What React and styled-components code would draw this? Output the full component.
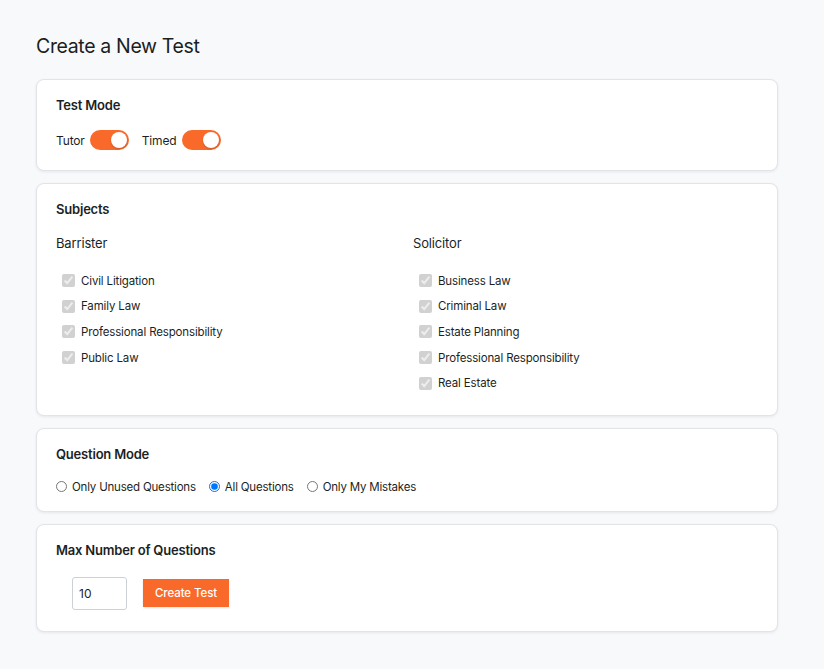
import React, { useState } from "react";
import styled, { createGlobalStyle } from "styled-components";

const GlobalStyle = createGlobalStyle`
  body {
    margin: 0;
    background: #f8f9fb;
    font-family: Inter, "Noto Sans", sans-serif;
    color: #1c1f24;
  }
`;

const barrister = ["Civil Litigation", "Family Law", "Professional Responsibility", "Public Law"];
const solicitor = ["Business Law", "Criminal Law", "Estate Planning", "Professional Responsibility", "Real Estate"];

function App() {
  const [tutor, setTutor] = useState(true);
  const [timed, setTimed] = useState(true);
  const [mode, setMode] = useState("all");

  return (
    <Page>
      <GlobalStyle />
      <Title>Create a New Test</Title>

      <Card>
        <Heading>Test Mode</Heading>
        <ToggleRow>
          <ToggleLabel>
            Tutor
            <Switch $on={tutor} onClick={() => setTutor(!tutor)} />
          </ToggleLabel>
          <ToggleLabel>
            Timed
            <Switch $on={timed} onClick={() => setTimed(!timed)} />
          </ToggleLabel>
        </ToggleRow>
      </Card>

      <Card $bottom={19}>
        <Heading>Subjects</Heading>
        <Columns>
          <Column>
            <GroupTitle>Barrister</GroupTitle>
            {barrister.map((s) => (
              <CheckRow key={s}>
                <input type="checkbox" checked disabled readOnly />
                {s}
              </CheckRow>
            ))}
          </Column>
          <Column>
            <GroupTitle>Solicitor</GroupTitle>
            {solicitor.map((s) => (
              <CheckRow key={s}>
                <input type="checkbox" checked disabled readOnly />
                {s}
              </CheckRow>
            ))}
          </Column>
        </Columns>
      </Card>

      <Card $bottom={17}>
        <Heading>Question Mode</Heading>
        <RadioRow>
          <RadioLabel>
            <input type="radio" name="qm" checked={mode === "unused"} onChange={() => setMode("unused")} />
            Only Unused Questions
          </RadioLabel>
          <RadioLabel>
            <input type="radio" name="qm" checked={mode === "all"} onChange={() => setMode("all")} />
            All Questions
          </RadioLabel>
          <RadioLabel>
            <input type="radio" name="qm" checked={mode === "mistakes"} onChange={() => setMode("mistakes")} />
            Only My Mistakes
          </RadioLabel>
        </RadioRow>
      </Card>

      <Card $bottom={21}>
        <Heading>Max Number of Questions</Heading>
        <ActionRow>
          <NumberInput type="number" defaultValue={10} />
          <Button>Create Test</Button>
        </ActionRow>
      </Card>
    </Page>
  );
}

const Page = styled.div`
  width: 742px;
  padding: 33px 36px 38px;
  display: flex;
  flex-direction: column;
  gap: 12px;
`;

const Title = styled.h1`
  margin: 0 0 8px;
  font-size: 19.5px;
  font-weight: 400;
  letter-spacing: -0.35px;
  color: #1b1e23;
  line-height: 26px;
`;

const Card = styled.section`
  background: #fff;
  border: 1px solid #e1e4e9;
  border-radius: 8px;
  box-shadow: 0 1px 3px rgba(20, 30, 50, 0.08);
  padding: 16px 19px ${(p) => p.$bottom ?? 20}px;
`;

const Heading = styled.h2`
  margin: 0;
  font-size: 13px;
  font-weight: 600;
  letter-spacing: -0.2px;
  line-height: 18px;
`;

const ToggleRow = styled.div`
  display: flex;
  gap: 13px;
  margin-top: 16px;
`;

const ToggleLabel = styled.label`
  display: flex;
  align-items: center;
  gap: 5px;
  font-size: 12px;
  letter-spacing: -0.15px;
`;

const Switch = styled.span`
  position: relative;
  width: 39px;
  height: 20px;
  border-radius: 10px;
  background: ${(p) => (p.$on ? "#f96a2a" : "#cfd3da")};
  cursor: pointer;
  &::after {
    content: "";
    position: absolute;
    top: 2px;
    left: ${(p) => (p.$on ? "21px" : "2px")};
    width: 16px;
    height: 16px;
    border-radius: 50%;
    background: #fff;
    box-shadow: 0 1px 2px rgba(0, 0, 0, 0.2);
  }
`;

const Columns = styled.div`
  display: grid;
  grid-template-columns: 357px 1fr;
  margin-top: 16px;
`;

const Column = styled.div`
  display: flex;
  flex-direction: column;
`;

const GroupTitle = styled.h3`
  margin: 0 0 16px;
  font-size: 13px;
  font-weight: 400;
  letter-spacing: -0.15px;
  line-height: 18px;
`;

const CheckRow = styled.label`
  display: flex;
  align-items: center;
  gap: 6px;
  height: 25.6px;
  padding-left: 6px;
  font-size: 11.5px;
  letter-spacing: -0.15px;
  input {
    margin: 0;
    width: 13px;
    height: 13px;
  }
`;

const RadioRow = styled.div`
  display: flex;
  gap: 13px;
  margin-top: 17px;
`;

const RadioLabel = styled.label`
  display: flex;
  align-items: center;
  gap: 5px;
  font-size: 11.5px;
  letter-spacing: -0.2px;
  input {
    margin: 0;
    width: 11px;
    height: 11px;
  }
`;

const ActionRow = styled.div`
  display: flex;
  align-items: center;
  gap: 16px;
  margin-top: 18px;
  padding-left: 16px;
`;

const NumberInput = styled.input`
  box-sizing: border-box;
  width: 55px;
  height: 33px;
  border: 1px solid #cdd1d7;
  border-radius: 3px;
  padding: 0 6px;
  font-family: inherit;
  font-size: 12px;
  color: #1c1f24;
  -moz-appearance: textfield;
  &::-webkit-inner-spin-button,
  &::-webkit-outer-spin-button {
    -webkit-appearance: none;
    margin: 0;
  }
`;

const Button = styled.button`
  height: 28px;
  padding: 0 12px;
  border: none;
  background: #f96a2a;
  color: #fff;
  font-family: inherit;
  font-size: 11.5px;
  font-weight: 500;
  letter-spacing: -0.1px;
  cursor: pointer;
  box-shadow: 0 1px 2px rgba(0, 0, 0, 0.1);
`;

export default App;
